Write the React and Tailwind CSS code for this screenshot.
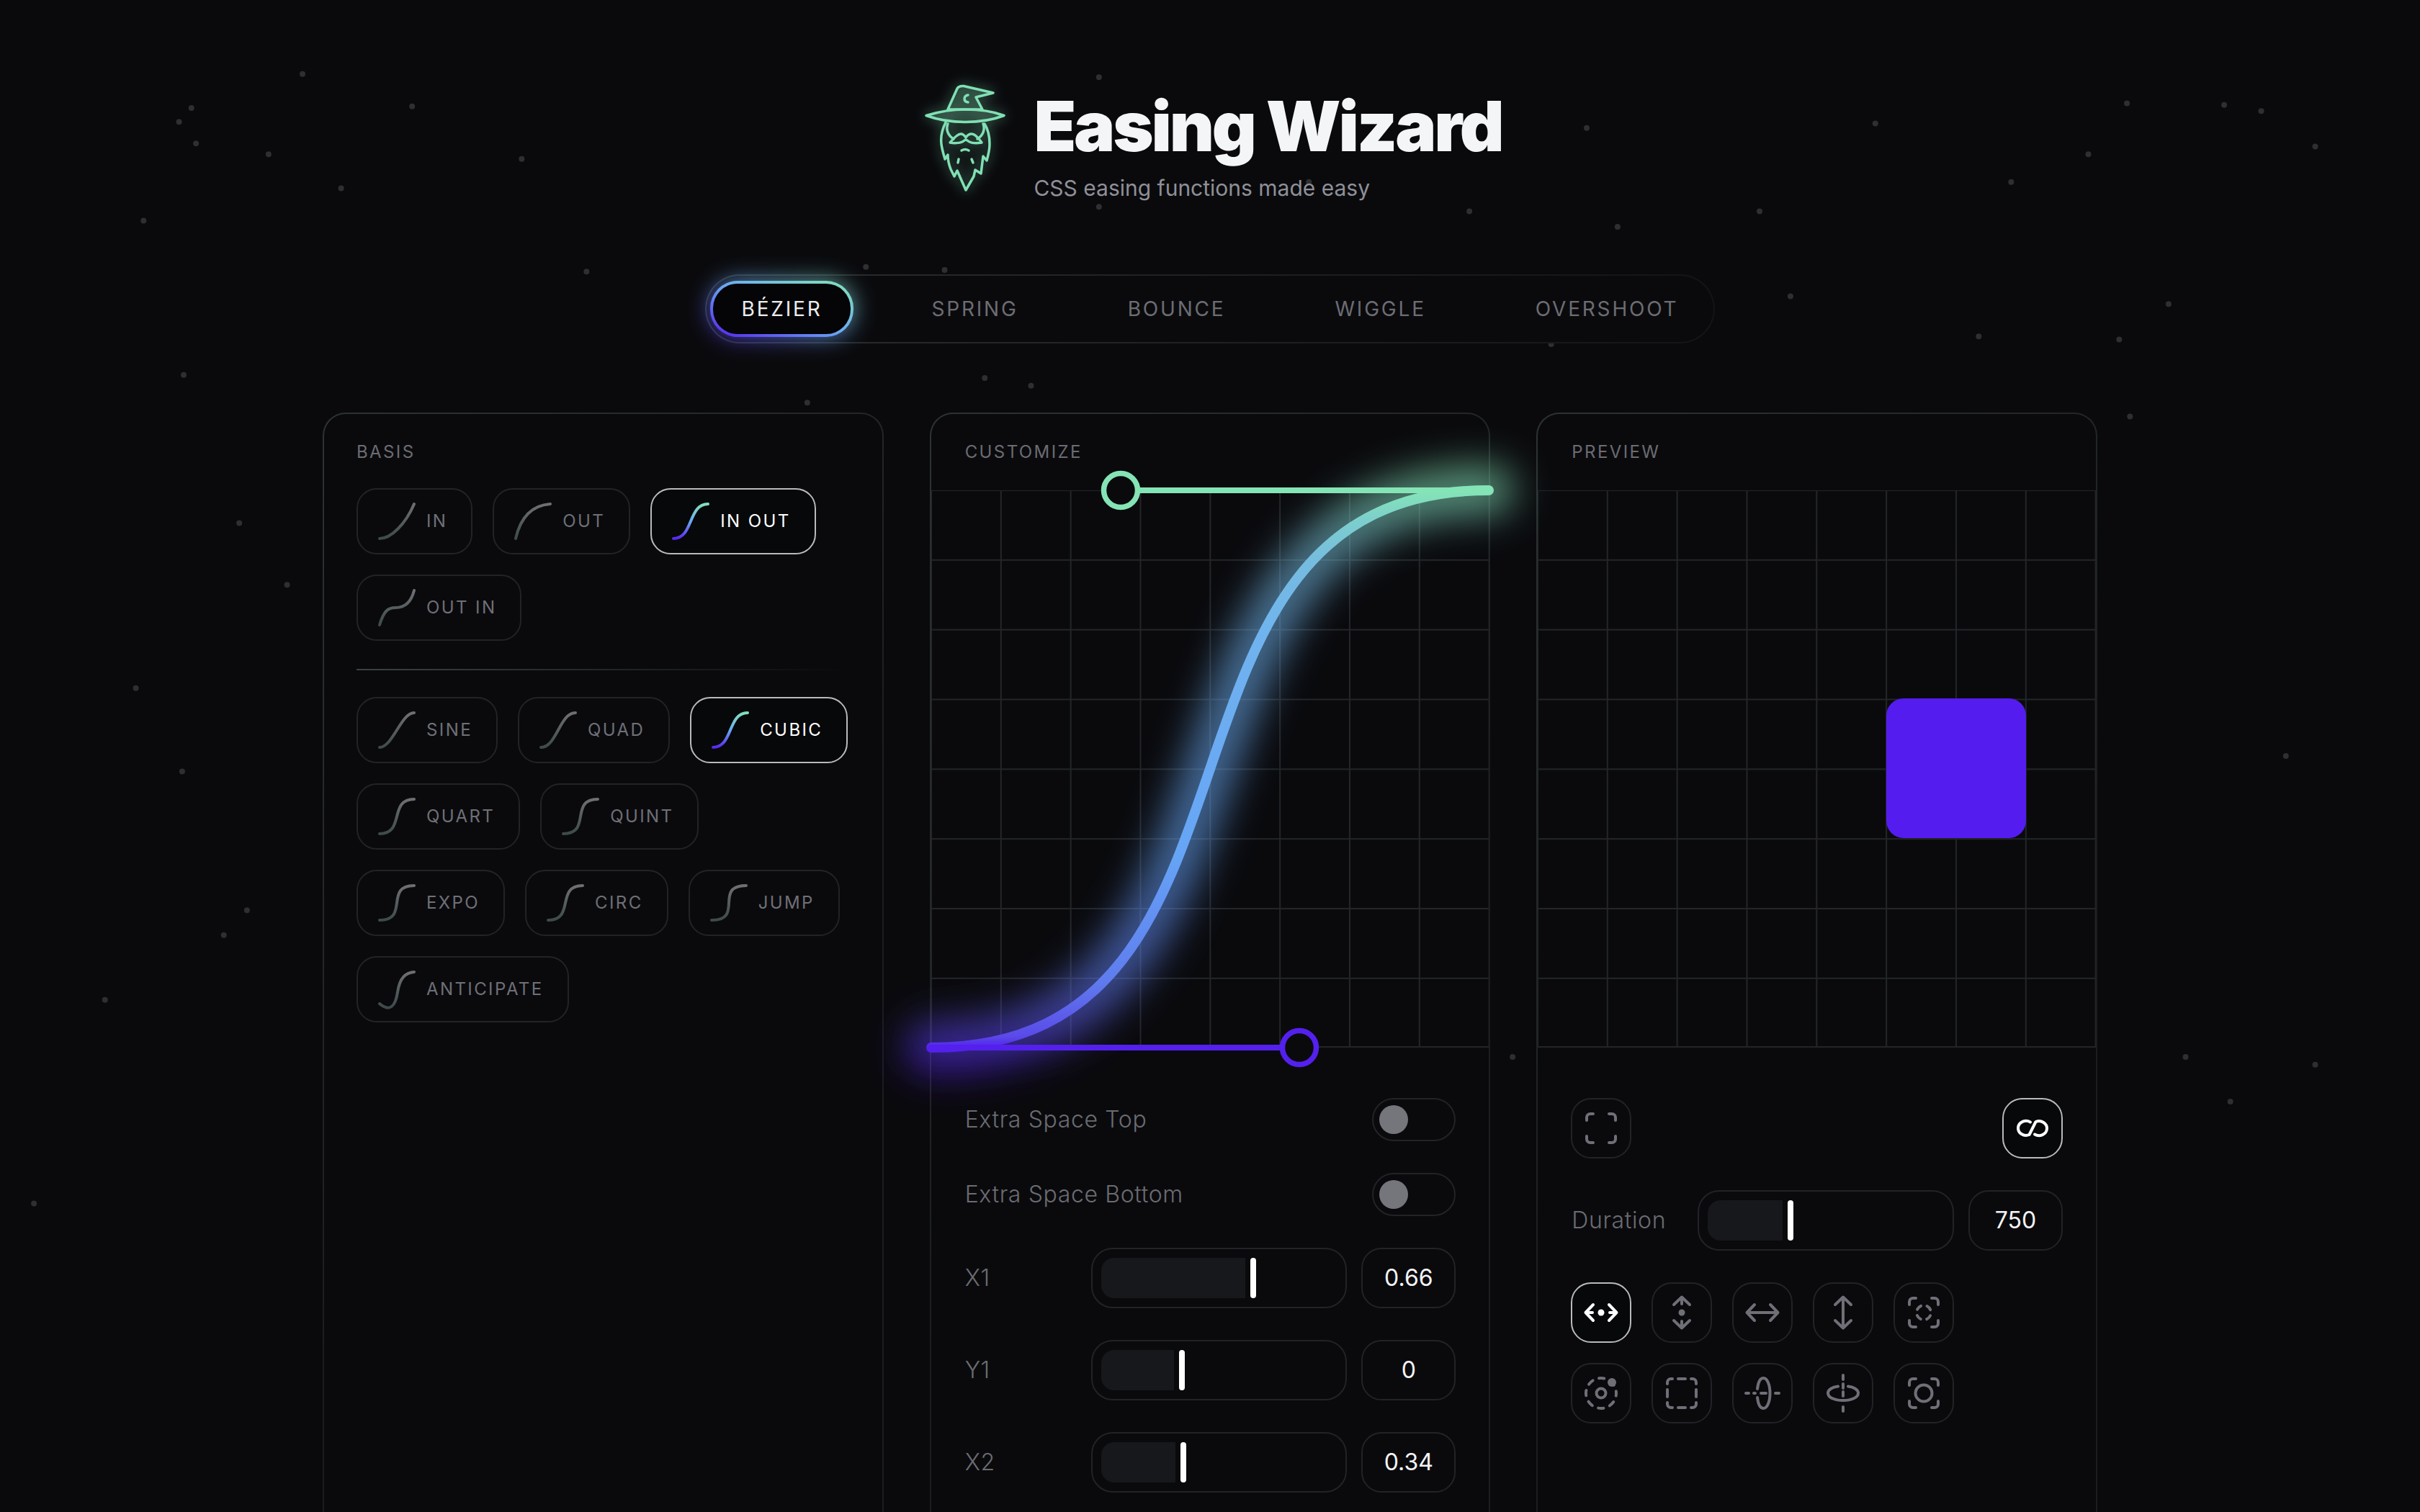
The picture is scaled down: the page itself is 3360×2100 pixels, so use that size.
import React from 'react';

const stars = [
  [196, 48], [124, 70], [116, 79], [127, 93], [174, 100], [221, 122], [267, 69], [93, 143],
  [338, 103], [380, 176], [119, 243], [155, 339], [186, 379], [88, 446], [118, 500], [160, 590],
  [145, 606], [68, 648], [22, 780], [712, 50], [712, 134], [848, 118], [561, 173], [612, 175],
  [1005, 223], [523, 261], [638, 245], [668, 250], [952, 137], [1028, 83], [1048, 147], [1140, 137],
  [1160, 192], [1008, 197], [1215, 80], [1378, 67], [1441, 68], [1465, 72], [1500, 95], [1303, 118],
  [1282, 218], [1405, 197], [1353, 100], [1373, 220], [1416, 685], [1445, 714], [1342, 790],
  [980, 685], [1481, 490], [1500, 690], [1380, 270],
];

const tabs = ['BÉZIER', 'SPRING', 'BOUNCE', 'WIGGLE', 'OVERSHOOT'];

const basis = [
  { name: 'IN', d: 'M2 50C18 50 38 30 50 2' },
  { name: 'OUT', d: 'M2 50C8 24 22 4 50 2' },
  { name: 'IN OUT', d: 'M2 50C30 50 22 2 50 2', active: true },
  { name: 'OUT IN', d: 'M2 50C8 30 14 26 24 26C38 26 46 18 50 2' },
];

const families = [
  { name: 'SINE', d: 'M2 50C20 50 32 2 50 2' },
  { name: 'QUAD', d: 'M2 50C24 50 28 2 50 2' },
  { name: 'CUBIC', d: 'M2 50C30 50 22 2 50 2', active: true },
  { name: 'QUART', d: 'M2 50C38 50 14 2 50 2' },
  { name: 'QUINT', d: 'M2 50C42 50 10 2 50 2' },
  { name: 'EXPO', d: 'M2 50C44 50 8 2 50 2' },
  { name: 'CIRC', d: 'M2 50C40 50 12 2 50 2' },
  { name: 'JUMP', d: 'M2 50C48 50 4 2 50 2' },
  { name: 'ANTICIPATE', d: 'M2 46C16 58 24 50 27 30C30 10 38 3 50 2' },
];

const corners = 'M4 13V9a5 5 0 0 1 5-5h4M35 4h4a5 5 0 0 1 5 5v4M44 35v4a5 5 0 0 1-5 5h-4M13 44H9a5 5 0 0 1-5-5v-4';

const transforms = [
  {
    active: true,
    body: (
      <>
        <path d="M13 13 2.500 24 13 35M2.500 24H12M35 13 45.500 24 35 35M45.500 24H36" />
        <circle cx="24" cy="24" r="4.500" fill="currentColor" stroke="none" />
      </>
    ),
  },
  {
    body: (
      <>
        <path d="M13 13 24 2.500 35 13M24 2.500V12M13 35 24 45.500 35 35M24 45.500V36" />
        <circle cx="24" cy="24" r="4.500" fill="currentColor" stroke="none" />
      </>
    ),
  },
  { body: <path d="M13 13 2.500 24 13 35M35 13 45.500 24 35 35M2.500 24H45.500" /> },
  { body: <path d="M13 13 24 2.500 35 13M13 35 24 45.500 35 35M24 2.500V45.500" /> },
  {
    body: (
      <>
        <path d={corners} />
        <circle cx="24" cy="24" r="10" strokeDasharray="7 8.700" strokeDashoffset="-4.350" />
      </>
    ),
  },
  {
    body: (
      <>
        <circle cx="24" cy="24" r="21" strokeDasharray="7.500 9" strokeDashoffset="3.750" />
        <circle cx="24" cy="24" r="6.500" />
        <circle cx="39" cy="9" r="6" fill="currentColor" stroke="none" />
      </>
    ),
  },
  { body: <path d="M4 11V9a5 5 0 0 1 5-5h2M37 4h2a5 5 0 0 1 5 5v2M44 37v2a5 5 0 0 1-5 5h-2M11 44H9a5 5 0 0 1-5-5v-2M19 4h10M19 44h10M4 19v10M44 19v10" /> },
  {
    body: (
      <>
        <path d="M17 18C18 9 21 3 25.500 3C30.500 3 34.500 12 34.500 24C34.500 36 30.500 45 25.500 45C21 45 18 39 17 30" />
        <path d="M1 24H5M12 24H14M22 24H29M42 24H47" />
      </>
    ),
  },
  {
    body: (
      <>
        <path d="M17 14.500C9 15.500 3 19 3 24c0 6 9.500 10 21 10s21-4 21-10c0-5-6-8.500-14-9.500" />
        <path d="M24-1v6M24 11v6M24 22v6M24 43v6" />
      </>
    ),
  },
  {
    body: (
      <>
        <path d={corners} />
        <circle cx="24" cy="24" r="11.500" />
      </>
    ),
  },
];

function Star({ x, y }) {
  return <circle cx={x * 2.143} cy={y * 2.143} r="4" fill="#2e2f32" />;
}

function Logo() {
  return (
    <svg
      width="136"
      height="160"
      viewBox="12 10 136 160"
      fill="none"
      stroke="#80e0b4"
      strokeWidth="3.500"
      strokeLinecap="round"
      strokeLinejoin="round"
      className="drop-shadow-[0_0_9px_rgba(128,224,180,0.6)]"
    >
      <path d="M54 52 67 23Q69 19 76 19.500L117 29 93 35 102 52Z" fill="#80e0b4" fillOpacity="0.16" />
      <path d="M82 32C76 33 75 41 82 42" />
      <path d="M24 60.500C45 54 65 52 78 52C95 52 115 54 132 60.500C115 67 95 69.500 78 69.500C60 69.500 42 67 24 60.500Z" fill="#80e0b4" fillOpacity="0.16" />
      <path d="M51 70C46 80 44 92 45 100C46 108 48 114 50 121L54 115C54 122 56 130 58 135L63 145 67 137 79 164 90 145 92 136 100 141 103 117 108 123C110 116 112 108 112 100C112 90 110 80 105 72" />
      <path d="M54 72C51 80 54 88 62 93M103 72C106 80 103 88 95 93" />
      <path d="M57 98C62 92 68 86 72 86C75 86 77 88 79 91C81 88 83 86 87 86C91 86 97 92 101 98C95 99 88 99 84 97C82 96 80 94 79 94C78 94 76 96 74 97C70 99 62 99 57 98Z" />
      <path d="M73 109Q78 106 83 109M69 121 68 126M87 121 89 126" />
    </svg>
  );
}

function EasePill({ name, d, active }) {
  return (
    <button
      className={`h-[92px] pl-[28px] pr-[33px] flex items-center gap-[15px] rounded-[28px] border-2 text-[24px] tracking-[0.1em] ${
        active ? 'border-[#b9babd] text-white bg-[#07080a]' : 'border-[#222327] text-[#6f7077]'
      }`}
    >
      <svg width="52" height="52" viewBox="0 0 52 52" fill="none" className="overflow-visible">
        <path d={d} stroke={active ? 'url(#pillActive)' : 'url(#pillIdle)'} strokeWidth="4" strokeLinecap="round" />
      </svg>
      {name}
    </button>
  );
}

function PanelLabel({ children }) {
  return <div className="text-[24px] leading-[32px] tracking-[0.1em] text-[#6b6c72]">{children}</div>;
}

function Toggle({ label }) {
  return (
    <div className="flex items-center justify-between">
      <span className="pl-[1px] text-[32px] font-light tracking-[0.02em] text-[#6b6c72]">{label}</span>
      <span className="h-[60px] w-[116px] rounded-full border-2 border-[#222327] flex items-center pl-[8px]">
        <span className="w-[40px] h-[40px] rounded-full bg-[#75767c]" />
      </span>
    </div>
  );
}

function SliderRow({ label, fill, value }) {
  return (
    <div className="flex items-center gap-[20px]">
      <span className="w-[156px] pl-[1px] text-[32px] font-light tracking-[0.02em] text-[#6b6c72]">{label}</span>
      <div className="flex-1 h-[84px] rounded-[30px] border-2 border-[#222327] p-[12px] flex items-stretch gap-[7px]">
        <div className="rounded-l-[18px] bg-[#17181b]" style={{ width: fill }} />
        <div className="w-[8px] rounded-full bg-white" />
      </div>
      <div className="w-[131px] h-[84px] rounded-[28px] border-2 border-[#222327] flex items-center justify-center text-[32px] text-[#f4f4f5]">
        {value}
      </div>
    </div>
  );
}

function IconButton({ active, children }) {
  return (
    <button
      className={`w-[84px] h-[84px] rounded-[28px] border-2 flex items-center justify-center ${
        active ? 'border-[#b9babd] text-white bg-[#07080a]' : 'border-[#222327] text-[#6f7077]'
      }`}
    >
      <svg
        width="48"
        height="48"
        viewBox="0 0 48 48"
        fill="none"
        stroke="currentColor"
        strokeWidth="4"
        strokeLinecap="round"
        strokeLinejoin="round"
        className="overflow-visible"
      >
        {children}
      </svg>
    </button>
  );
}

function Panel({ children }) {
  return (
    <section className="rounded-[32px] border-2 border-transparent [background:linear-gradient(#0a0a0d,#0a0a0d)_padding-box,linear-gradient(135deg,#2c3332,#1c1d20_55%)_border-box]">
      {children}
    </section>
  );
}

const gridClass =
  'relative h-[774px] border-b-2 border-[#222528] bg-[linear-gradient(to_right,#222628_2px,transparent_2px),linear-gradient(to_bottom,#222628_2px,transparent_2px)] bg-[size:96.83px_96.83px] bg-[position:-1px_-1px]';

function CurveGraph() {
  const curve = 'M0 774C511 774 263 0 774 0';
  return (
    <svg viewBox="0 0 774 774" fill="none" className="absolute left-0 top-0 w-[774px] h-[774px] overflow-visible">
      <defs>
        <linearGradient id="curveStroke" gradientUnits="userSpaceOnUse" x1="0" y1="0" x2="0" y2="774">
          <stop offset="0" stopColor="#85e4b6" />
          <stop offset="0.05" stopColor="#7dd0cb" />
          <stop offset="0.125" stopColor="#76bcdf" />
          <stop offset="0.25" stopColor="#70b4ee" />
          <stop offset="0.5" stopColor="#6aa9f3" />
          <stop offset="0.65" stopColor="#66a5f5" />
          <stop offset="0.88" stopColor="#5f7cee" />
          <stop offset="0.98" stopColor="#5a4ae8" />
          <stop offset="1" stopColor="#5520ee" />
        </linearGradient>
        <filter id="curveGlow" filterUnits="userSpaceOnUse" x="-180" y="-180" width="1134" height="1134">
          <feGaussianBlur stdDeviation="26" />
        </filter>
      </defs>
      <path d={curve} stroke="url(#curveStroke)" strokeWidth="72" strokeLinecap="round" opacity="0.6" filter="url(#curveGlow)" />
      <path d={curve} stroke="url(#curveStroke)" strokeWidth="14" strokeLinecap="round" />
      <path d="M0 774H490" stroke="#5420ee" strokeWidth="8" strokeLinecap="round" />
      <path d="M285 0H774" stroke="#85e4b6" strokeWidth="8" strokeLinecap="round" />
      <circle cx="511" cy="774" r="23.500" fill="#0a0a0d" stroke="#5420ee" strokeWidth="7.500" />
      <circle cx="263" cy="0" r="23.500" fill="#0a0a0d" stroke="#85e4b6" strokeWidth="7.500" />
    </svg>
  );
}

export default function App() {
  return (
    <div className="relative h-[2100px] overflow-hidden bg-[#0a0a0d] font-[family-name:Inter,sans-serif]">
      {/* star field */}
      <svg className="absolute left-0 top-0 w-[3360px] h-[2100px]">
        {stars.map(([x, y]) => (
          <Star key={`${x}-${y}`} x={x} y={y} />
        ))}
      </svg>
      <svg className="absolute w-0 h-0">
        <defs>
          <linearGradient id="pillIdle" gradientUnits="userSpaceOnUse" x1="0" y1="52" x2="0" y2="0">
            <stop offset="0" stopColor="#3c4948" />
            <stop offset="1" stopColor="#707175" />
          </linearGradient>
          <linearGradient id="pillActive" gradientUnits="userSpaceOnUse" x1="0" y1="52" x2="0" y2="0">
            <stop offset="0" stopColor="#5520ee" />
            <stop offset="0.5" stopColor="#6aa9f3" />
            <stop offset="1" stopColor="#85e4b6" />
          </linearGradient>
        </defs>
      </svg>

      <div className="relative flex flex-col items-center pt-[110px]">
        {/* header */}
        <header className="flex items-start gap-[25px]">
          <Logo />
          <div className="pt-[17px]">
            <h1 className="text-[96px] leading-[96px] font-black tracking-[-0.033em] text-[#f4f5f7]">Easing Wizard</h1>
            <p className="mt-[14px] text-[30px] leading-[48px] text-[#8f9098]">CSS easing functions made easy</p>
          </div>
        </header>

        {/* tabs */}
        <nav className="mt-[96px] h-[96px] flex items-center gap-[64px] px-[5px] rounded-full border-2 border-transparent [background:linear-gradient(#0a0a0d,#0a0a0d)_padding-box,linear-gradient(90deg,#2b2d30,#131417)_border-box]">
          {tabs.map((tab, i) =>
            i === 0 ? (
              <div key={tab} className="relative">
                <div className="absolute inset-0 rounded-[38px] blur-[16px] opacity-80 bg-[linear-gradient(to_top_right,#5520ee,#6aa9f3_50%,#85e4b6)]" />
                <div className="relative rounded-[38px] p-[4px] bg-[linear-gradient(to_top_right,#5520ee,#6aa9f3_50%,#85e4b6)]">
                  <div className="h-[70px] px-[40px] rounded-[34px] bg-[#050507] flex items-center text-[28px] tracking-[0.1em] text-[#ececee]">
                    {tab}
                  </div>
                </div>
              </div>
            ) : (
              <div key={tab} className="h-[78px] px-[44px] flex items-center text-[28px] tracking-[0.1em] text-[#6c6d73]">
                {tab}
              </div>
            )
          )}
        </nav>

        {/* panels */}
        <main className="mt-[96px] w-[2464px] h-[1600px] grid grid-cols-3 gap-[64px]">
          <Panel>
            <div className="px-[45px] pt-[37px]">
              <PanelLabel>BASIS</PanelLabel>
              <div className="mt-[34px] flex flex-wrap gap-[28px]">
                {basis.map((item) => (
                  <EasePill key={item.name} {...item} />
                ))}
              </div>
              <div className="mt-[39px] mb-[37px] h-[2px] bg-[linear-gradient(to_right,#3a4342,transparent)]" />
              <div className="flex flex-wrap gap-[28px]">
                {families.map((item) => (
                  <EasePill key={item.name} {...item} />
                ))}
              </div>
            </div>
          </Panel>

          <Panel>
            <div className="h-[106px] px-[47px] flex items-center">
              <PanelLabel>CUSTOMIZE</PanelLabel>
            </div>
            <div className={gridClass}>
              <CurveGraph />
            </div>
            <div className="px-[46px] pt-[70px] flex flex-col gap-[44px]">
              <Toggle label="Extra Space Top" />
              <Toggle label="Extra Space Bottom" />
              <SliderRow label="X1" fill={200} value="0.66" />
              <SliderRow label="Y1" fill={101} value="0" />
              <SliderRow label="X2" fill={103} value="0.34" />
            </div>
          </Panel>

          <Panel>
            <div className="h-[106px] px-[47px] flex items-center">
              <PanelLabel>PREVIEW</PanelLabel>
            </div>
            <div className={gridClass}>
              <div className="absolute left-[484px] top-[289px] w-[194px] h-[194px] rounded-[24px] bg-[#551cef]" />
            </div>
            <div className="px-[46px] pt-[70px] flex flex-col gap-[44px]">
              <div className="flex justify-between">
                <IconButton>
                  <path d={corners} />
                </IconButton>
                <IconButton active>
                  <path d="M21 15.500A11 10 0 1 0 19.500 33L28.500 15A11 10 0 1 1 27 32.500" />
                </IconButton>
              </div>
              <SliderRow label="Duration" fill={104} value="750" />
              <div className="flex flex-wrap gap-[28px] w-[532px]">
                {transforms.map((item, i) => (
                  <IconButton key={i} active={item.active}>
                    {item.body}
                  </IconButton>
                ))}
              </div>
            </div>
          </Panel>
        </main>
      </div>
    </div>
  );
}
